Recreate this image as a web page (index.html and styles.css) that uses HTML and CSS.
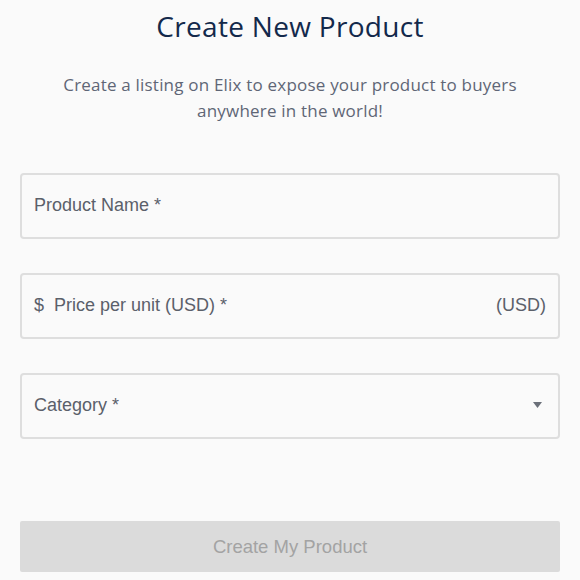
FILE: index.html
```html
<!DOCTYPE html>
<html>
<head>
<meta charset="utf-8">
<link rel="stylesheet" href="styles.css">
</head>
<body>
<main class="page">
  <h1 class="title">Create New Product</h1>
  <p class="subtitle">Create a listing on Elix to expose your product to buyers<br>anywhere in the world!</p>
  <form class="form">
    <div class="field">
      <span class="label">Product Name *</span>
    </div>
    <div class="field">
      <span class="prefix">$</span>
      <span class="label grow">Price per unit (USD) *</span>
      <span class="suffix">(USD)</span>
    </div>
    <div class="field">
      <span class="label grow">Category *</span>
      <svg class="caret" width="9" height="6" viewBox="0 0 9 6"><path d="M0 0H9L4.5 6Z" fill="#6b7079"/></svg>
    </div>
    <div class="button">Create My Product</div>
  </form>
</main>
</body>
</html>
```
FILE: styles.css
```css
html, body {
  margin: 0;
  padding: 0;
  background: #fafafa;
}
.page {
  padding: 0 20px;
  display: flex;
  flex-direction: column;
}
.title {
  margin: 6px 0 0;
  font-family: "Open Sans", sans-serif;
  font-weight: 400;
  font-size: 28px;
  letter-spacing: 0.3px;
  line-height: 40px;
  color: #13294b;
  text-align: center;
}
.subtitle {
  margin: 26px 0 0;
  font-family: "Open Sans", sans-serif;
  font-size: 17px;
  letter-spacing: 0.2px;
  line-height: 26px;
  color: #5f6676;
  text-align: center;
}
.form {
  margin-top: 49px;
  display: flex;
  flex-direction: column;
}
.field {
  height: 66px;
  box-sizing: border-box;
  border: 2px solid #dedede;
  border-radius: 4px;
  background: #fafafa;
  display: flex;
  align-items: center;
  padding: 0 12px 2px 12px;
  margin-bottom: 34px;
  font-family: "Liberation Sans", Arial, sans-serif;
  font-size: 18px;
  color: #5b606a;
}
.prefix {
  margin-right: 10px;
}
.grow {
  flex: 1;
}
.caret {
  margin-right: 4px;
}
.button {
  margin-top: 48px;
  height: 51px;
  background: #dbdbdb;
  border-radius: 2px;
  display: flex;
  align-items: center;
  justify-content: center;
  font-family: "Liberation Sans", Arial, sans-serif;
  font-size: 18.5px;
  color: #a3a3a3;
}
```
